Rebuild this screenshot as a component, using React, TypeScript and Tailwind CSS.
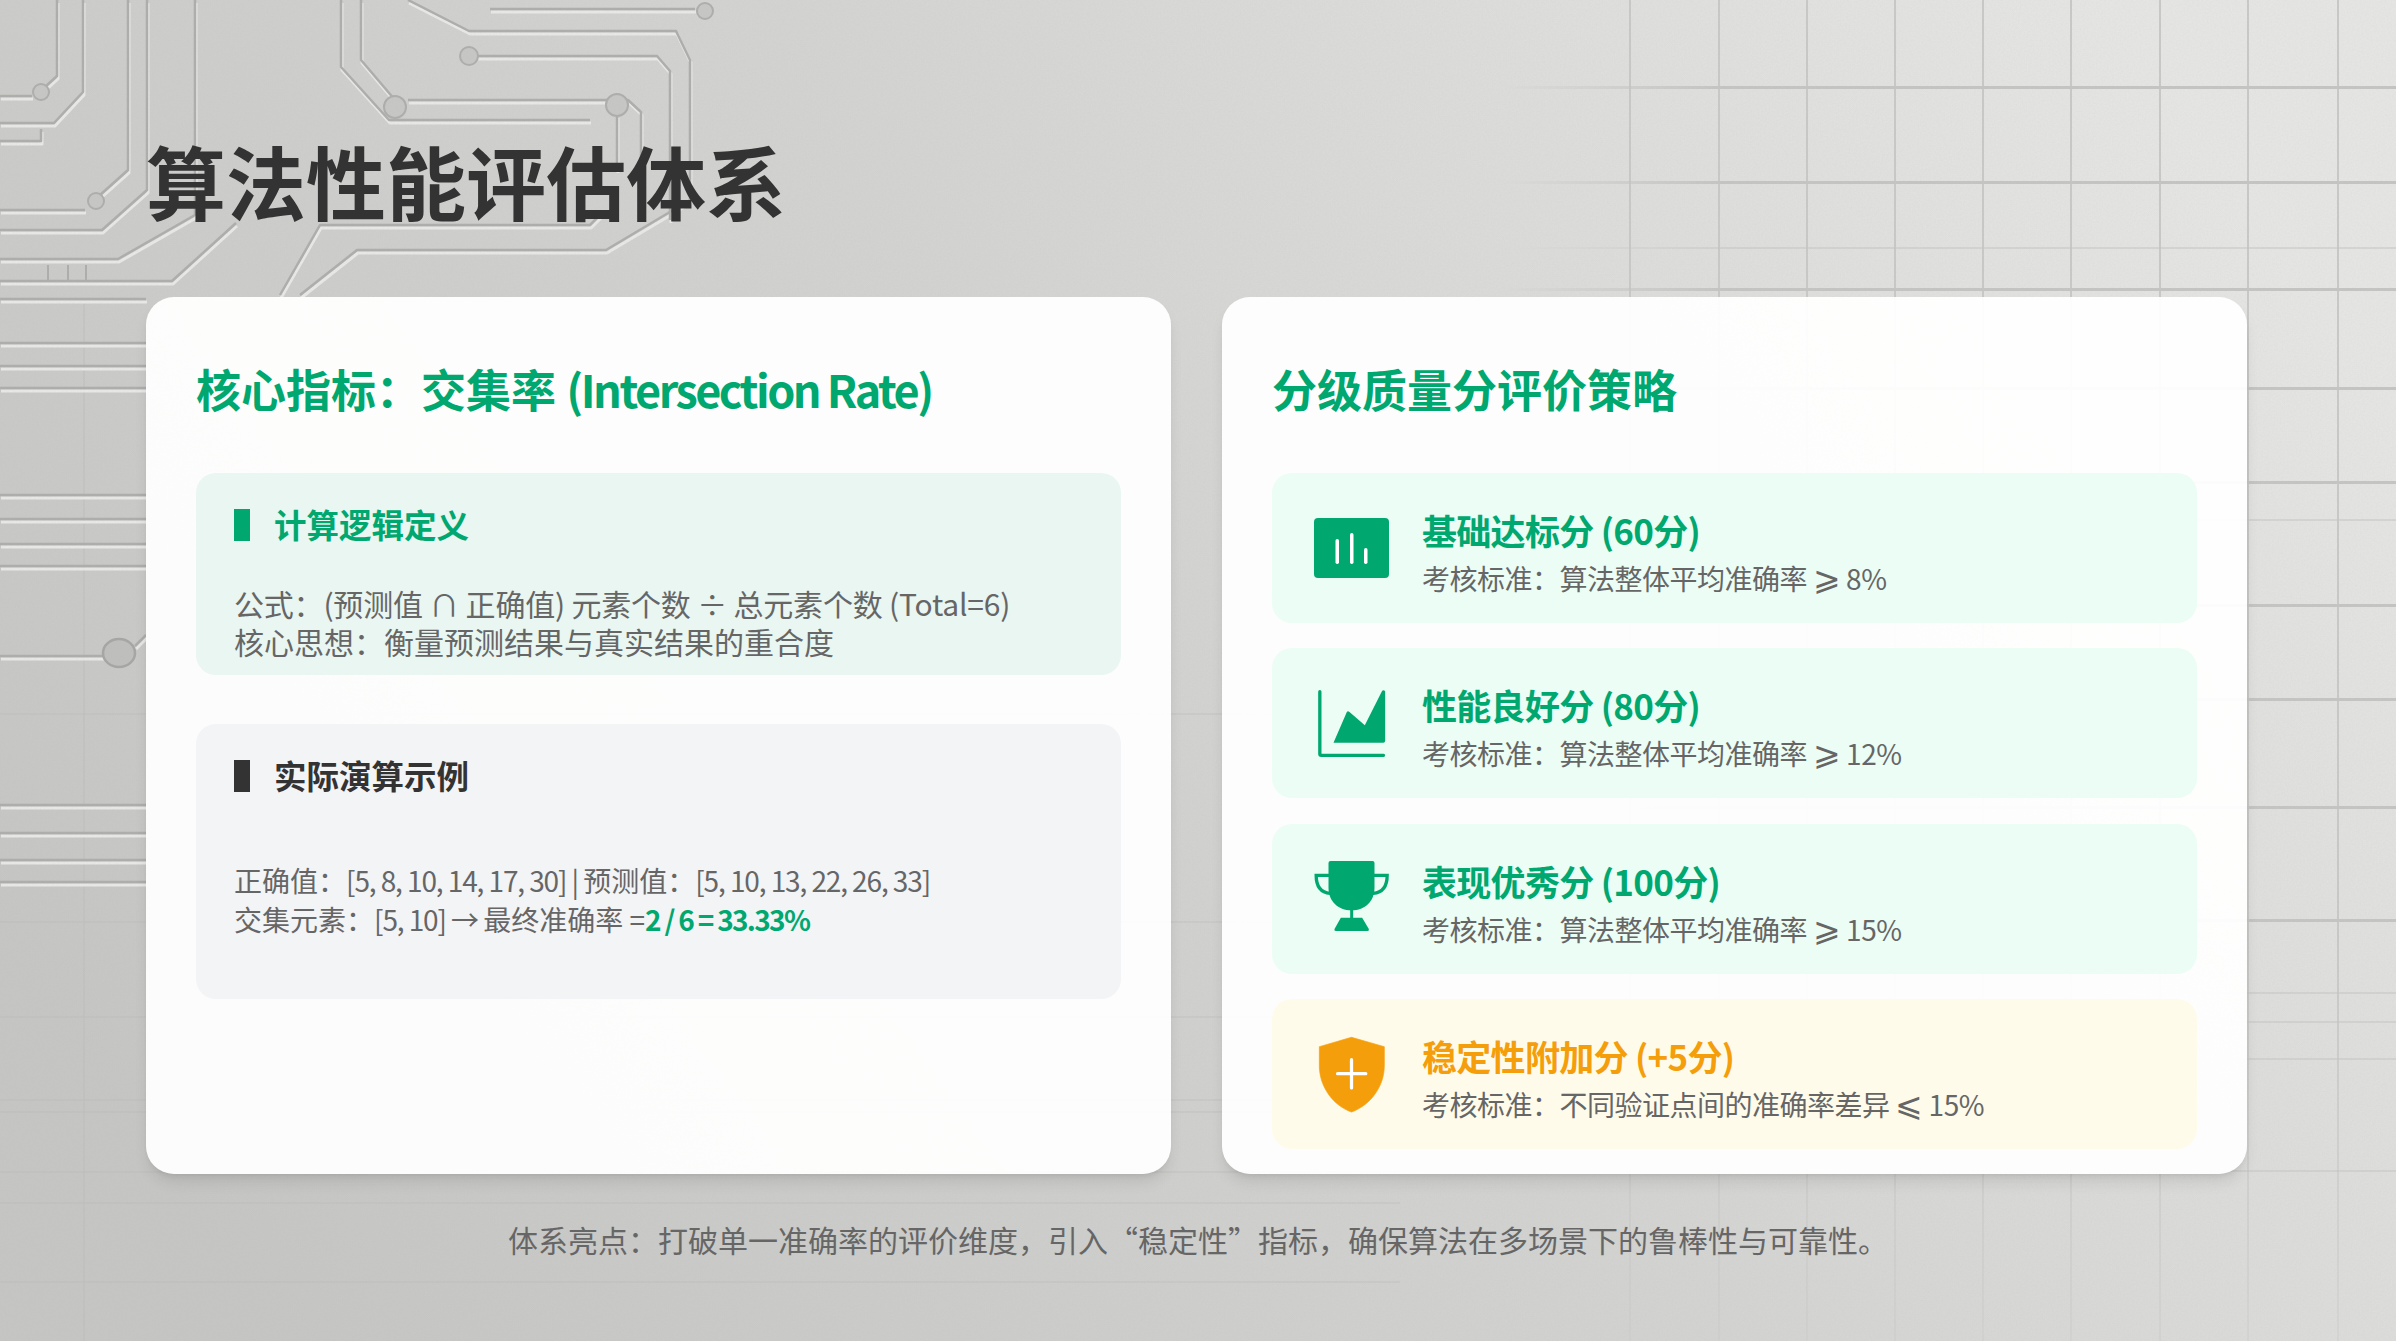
const GREEN = "#00a870"

// circuit traces on the left, drawn twice for the embossed look
const traces = [
  "M0 96 H32", "M57 0 V76 L46 86", "M83 0 V92 L54 123 H0", "M41 129 V141 H0",
  "M128 0 V170 L100 195", "M85 210 H0", "M147 0 V190 L102 230 H0", "M195 0 V215 L118 259 H0",
  "M0 281 H172 L236 223", "M0 299 H146", "M300 295 L357 250 H606 L690 200 V60 L676 31 H469 L408 0",
  "M475 56 H657 L670 71 V220", "M408 100 H628 L641 112 V205", "M341 0 V67 L389 120 H590",
  "M617 115 V170", "M490 9 H695", "M361 0 V60 L395 100", "M280 295 L320 225 H590 L600 215",
  "M0 343 H146", "M0 366 H146", "M0 388 H146", "M0 495 H146", "M0 519 H146", "M0 544 H146", "M0 566 H146",
  "M0 656 H103 M135 646 L146 635", "M0 805 H146", "M0 833 H146", "M0 860 H146", "M0 882 H146",
]

const pads = [
  [41, 92, 8], [96, 201, 8], [395, 107, 11], [469, 56, 9], [617, 105, 11], [705, 11, 8],
]

const gridX = [1629, 1718, 1806, 1894, 1982, 2070, 2159, 2247, 2337]
const gridY = [86, 181, 288, 387, 481, 604, 698, 806, 919]
const faintY = [247, 519, 992, 1021, 1058, 1170]

function Background() {
  return (
    <svg className="absolute inset-0 w-full h-full" viewBox="0 0 2396 1341">
      <defs>
        <linearGradient id="page" x1="0" y1="0.7" x2="1" y2="0.3">
          <stop offset="0" stopColor="#c5c5c3" />
          <stop offset="0.5" stopColor="#d2d2d0" />
          <stop offset="1" stopColor="#e5e5e3" />
        </linearGradient>
        <linearGradient id="gridFade" x1="0" y1="0" x2="1" y2="0">
          <stop offset="0" stopColor="#c4c4c2" stopOpacity="0" />
          <stop offset="0.25" stopColor="#c4c4c2" stopOpacity="1" />
        </linearGradient>
        <linearGradient id="gridDown" x1="0" y1="0" x2="0" y2="1">
          <stop offset="0" stopColor="#c8c8c6" />
          <stop offset="0.7" stopColor="#c8c8c6" />
          <stop offset="1" stopColor="#c8c8c6" stopOpacity="0.35" />
        </linearGradient>
        <filter id="grain">
          <feTurbulence type="fractalNoise" baseFrequency="0.55" numOctaves="2" seed="4" />
          <feColorMatrix values="0 0 0 0 0.5  0 0 0 0 0.5  0 0 0 0 0.5  0.5 0 0 0 -0.14" />
        </filter>
      </defs>
      <rect width="2396" height="1341" fill="url(#page)" />
      {gridX.map((x) => (
        <rect key={x} x={x} y="0" width="2" height="1341" fill="url(#gridDown)" />
      ))}
      {gridY.map((y) => (
        <rect key={y} x="1500" y={y} width="896" height="3" fill="url(#gridFade)" />
      ))}
      {faintY.map((y) => (
        <rect key={y} x="1500" y={y} width="896" height="2" fill="url(#gridFade)" opacity="0.5" />
      ))}
      {[713, 921, 1016, 1099, 1111, 1171, 1202, 1281].map((y) => (
        <rect key={y} x="0" y={y} width="1400" height="2" fill="#b9b9b7" opacity="0.3" />
      ))}
      <rect x="83" y="300" width="2" height="1041" fill="#bdbdbb" opacity="0.5" />
      <g fill="none" strokeLinejoin="round">
        {traces.map((d) => (
          <path key={d} d={d} stroke="#e8e8e6" strokeWidth="3" transform="translate(1 3)" />
        ))}
        {traces.map((d) => (
          <path key={d} d={d} stroke="#adadab" strokeWidth="2.5" />
        ))}
      </g>
      {pads.map(([x, y, r]) => (
        <circle key={x} cx={x} cy={y} r={r} fill="#c6c6c4" stroke="#adadab" strokeWidth="2" />
      ))}
      <ellipse cx="119" cy="653" rx="16" ry="14" fill="#bebebc" stroke="#a5a5a3" strokeWidth="2.5" />
      <path d="M48 265 V281 M68 265 V281 M86 265 V281" stroke="#adadab" strokeWidth="2" fill="none" />
      <rect width="2396" height="1341" filter="url(#grain)" opacity="0.35" />
    </svg>
  )
}

function BarIcon() {
  return (
    <svg width="75" height="60" viewBox="0 0 75 60">
      <rect width="75" height="60" rx="4" fill={GREEN} />
      <rect x="21.5" y="21" width="3.5" height="25" rx="1.7" fill="#fff" />
      <rect x="36" y="15" width="3.5" height="31" rx="1.7" fill="#fff" />
      <rect x="50" y="30" width="3.5" height="16" rx="1.7" fill="#fff" />
    </svg>
  )
}

function ChartIcon() {
  return (
    <svg width="75" height="75" viewBox="72 30 224 225">
      <path d="M89 47 V234 a4 4 0 0 0 4 4 H280" fill="none" stroke={GREEN} strokeWidth="10" strokeLinecap="round" />
      <path
        d="M130 200 L170 108 Q173 103 178 108 L224 148 L276 44 Q281 40 285 46 V194 Q285 200 279 200 Z"
        fill={GREEN}
      />
    </svg>
  )
}

function TrophyIcon() {
  return (
    <svg width="75" height="75" viewBox="72 30 224 225">
      <path
        d="M115 36 Q115 30 121 30 H247 Q253 30 253 36 V110 C253 150 225 178 184 178 C143 178 115 150 115 110 Z"
        fill={GREEN}
      />
      <path
        d="M117 73 H78 C78 105 90 125 120 127 M251 73 H291 C291 105 279 125 249 127"
        fill="none"
        stroke={GREEN}
        strokeWidth="10"
        strokeLinecap="round"
      />
      <rect x="180" y="175" width="9" height="28" fill={GREEN} />
      <path
        d="M152 200 H216 L236 234 Q238 240 232 240 H137 Q131 240 133 234 Z"
        fill={GREEN}
      />
    </svg>
  )
}

function ShieldIcon() {
  return (
    <svg width="75" height="78" viewBox="72 18 224 240">
      <path
        d="M184 25 L85 54 V112 C85 180 130 236 184 255 C238 236 285 180 285 112 V54 Z"
        fill="#f59e0b"
        stroke="#f59e0b"
        strokeLinejoin="round"
        strokeWidth="2"
      />
      <path d="M184 94 V181 M141 137 H228" stroke="#fff" strokeWidth="10" strokeLinecap="round" />
    </svg>
  )
}

const scores = [
  { icon: <BarIcon />, title: "基础达标分 (60分)", rule: "算法整体平均准确率", sign: "⩾", value: "8%" },
  { icon: <ChartIcon />, title: "性能良好分 (80分)", rule: "算法整体平均准确率", sign: "⩾", value: "12%" },
  { icon: <TrophyIcon />, title: "表现优秀分 (100分)", rule: "算法整体平均准确率", sign: "⩾", value: "15%" },
  { icon: <ShieldIcon />, title: "稳定性附加分 (+5分)", rule: "不同验证点间的准确率差异", sign: "⩽", value: "15%", warm: true },
]

function ScoreRow({ icon, title, rule, sign, value, warm = false }: {
  icon: React.ReactNode
  title: string
  rule: string
  sign: string
  value: string
  warm?: boolean
}) {
  return (
    <div className={`h-[150px] rounded-[20px] flex items-center pl-[42px] ${warm ? "bg-[#fffbeb]" : "bg-[#ecfdf5]"}`}>
      <div className="w-[75px] flex justify-center shrink-0">{icon}</div>
      <div className="ml-[33px] pt-[8px]">
        <div className={`text-[35px] leading-[44px] font-bold tracking-[-0.7px] ${warm ? "text-[#f59e0b]" : "text-[#00a870]"}`}>{title}</div>
        <div className="text-[28px] leading-[36px] text-[#666666] tracking-[-0.5px] mt-[6px]">
          考核标准&#xFF1A;{rule} <span className="text-[33px]">{sign}</span> {value}
        </div>
      </div>
    </div>
  )
}

export default function App() {
  return (
    <div
      className="relative w-[2396px] h-[1341px] overflow-hidden"
      style={{ fontFamily: '"Noto Sans CJK SC", "Noto Sans", sans-serif' }}
    >
      <Background />
      <div className="relative flex flex-col h-full pl-[146px] pr-[149px]">
        <h1 className="text-[80px] leading-[116px] font-bold text-[#333333] mt-[121px] h-[176px]">算法性能评估体系</h1>

        <div className="flex gap-[51px] h-[877px]">
          <div className="flex-1 bg-white/95 rounded-[28px] shadow-lg px-[50px] pt-[58.5px]">
            <h2 className="text-[45px] leading-[66px] font-bold text-[#00a870]">
              核心指标&#xFF1A;交集率 <span className="tracking-[-2.5px]">(Intersection Rate)</span>
            </h2>
            <div className="mt-[51px] h-[202px] rounded-[20px] bg-[#e9f6f1] px-[38px] pt-[32px]">
              <div className="flex items-center gap-[24px] h-[40px] text-[32.5px] font-bold text-[#00a870]">
                <span className="w-[16px] h-[32px] bg-[#00a870]" />
                计算逻辑定义
              </div>
              <p className="mt-[39px] text-[30px] leading-[38px] text-[#666666]">
                <span className="tracking-[-0.2px]">公式&#xFF1A;(预测值 ∩ 正确值) 元素个数 ÷ 总元素个数 (Total=6)</span>
                <br />
                核心思想&#xFF1A;衡量预测结果与真实结果的重合度
              </p>
            </div>
            <div className="mt-[49px] h-[275px] rounded-[20px] bg-[#f3f4f6] px-[38px] pt-[32px]">
              <div className="flex items-center gap-[24px] h-[40px] text-[32.5px] font-bold text-[#333333]">
                <span className="w-[16px] h-[32px] bg-[#333333]" />
                实际演算示例
              </div>
              <p className="mt-[65.5px] text-[28px] leading-[39px] text-[#666666]">
                正确值&#xFF1A;<span className="tracking-[-1.1px]">[5, 8, 10, 14, 17, 30] | </span>预测值&#xFF1A;
                <span className="tracking-[-1.1px]">[5, 10, 13, 22, 26, 33]</span>
                <br />
                交集元素&#xFF1A;<span className="tracking-[-1.1px]">[5, 10] → </span>最终准确率 =
                <span className="font-bold text-[#00a870] tracking-[-1.7px]">2 / 6 = 33.33%</span>
              </p>
            </div>
          </div>

          <div className="flex-1 bg-white/95 rounded-[28px] shadow-lg px-[50px] pt-[58.5px]">
            <h2 className="text-[45px] leading-[66px] font-bold text-[#00a870]">分级质量分评价策略</h2>
            <div className="mt-[51px] flex flex-col gap-[25.5px]">
              {scores.map((s) => (
                <ScoreRow key={s.title} {...s} />
              ))}
            </div>
          </div>
        </div>

        <p className="mt-[42.5px] text-center text-[30px] leading-[44px] text-[#666666] ml-[3px]">
          体系亮点&#xFF1A;打破单一准确率的评价维度&#xFF0C;引入&#x201C;稳定性&#x201D;指标&#xFF0C;确保算法在多场景下的鲁棒性与可靠性&#x3002;
        </p>
      </div>
    </div>
  )
}
